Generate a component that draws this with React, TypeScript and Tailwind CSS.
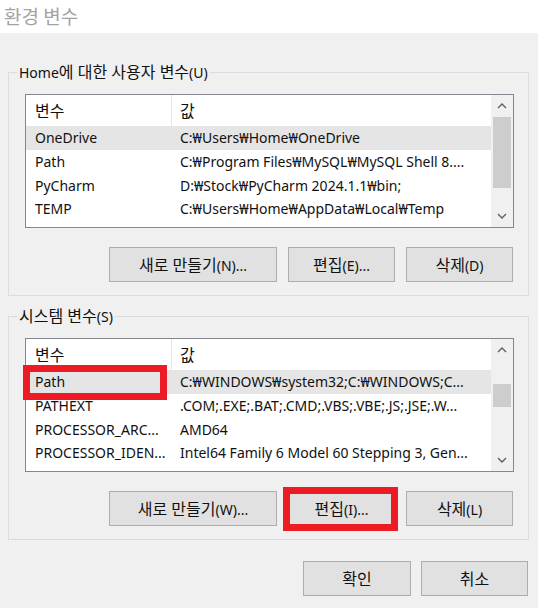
import React from "react";

type Row = { name: string; value: string };

const userRows: Row[] = [
  { name: "OneDrive", value: "C:₩Users₩Home₩OneDrive" },
  { name: "Path", value: "C:₩Program Files₩MySQL₩MySQL Shell 8...." },
  { name: "PyCharm", value: "D:₩Stock₩PyCharm 2024.1.1₩bin;" },
  { name: "TEMP", value: "C:₩Users₩Home₩AppData₩Local₩Temp" },
];

const sysRows: Row[] = [
  { name: "Path", value: "C:₩WINDOWS₩system32;C:₩WINDOWS;C..." },
  { name: "PATHEXT", value: ".COM;.EXE;.BAT;.CMD;.VBS;.VBE;.JS;.JSE;.W..." },
  { name: "PROCESSOR_ARC...", value: "AMD64" },
  { name: "PROCESSOR_IDEN...", value: "Intel64 Family 6 Model 60 Stepping 3, Gen..." },
];

// Renders Hangul runs a little larger, as Malgun Gothic does next to Latin text.
function K({ t }: { t: string }) {
  const parts = t.split(/([\uAC00-\uD7A3]+(?:\s[\uAC00-\uD7A3]+)*)/);
  return (
    <>
      {parts.map((p, i) =>
        /[\uAC00-\uD7A3]/.test(p) ? (
          <span key={i} className="text-[16px]">
            {p}
          </span>
        ) : (
          <span key={i}>{p}</span>
        )
      )}
    </>
  );
}

function Chevron({ up }: { up: boolean }) {
  return (
    <svg width="10" height="6" viewBox="0 0 10 6">
      {up ? (
        <polyline points="1,5 5,1 9,5" fill="none" stroke="#606060" strokeWidth="1.4" />
      ) : (
        <polyline points="1,1 5,5 9,1" fill="none" stroke="#606060" strokeWidth="1.4" />
      )}
    </svg>
  );
}

function Scrollbar({ gap, thumb }: { gap: number; thumb: number }) {
  return (
    <div className="flex w-[22px] shrink-0 flex-col bg-[#f0f0f0]">
      <div className="flex h-[22px] shrink-0 items-center justify-center">
        <Chevron up />
      </div>
      <div className="shrink-0" style={{ height: gap }} />
      <div className="mx-[2px] shrink-0 bg-[#cdcdcd]" style={{ height: thumb }} />
      <div className="flex-1" />
      <div className="flex h-[22px] shrink-0 items-center justify-center">
        <Chevron up={false} />
      </div>
    </div>
  );
}

function VarList({
  rows,
  gap,
  thumb,
  children,
}: {
  rows: Row[];
  gap: number;
  thumb: number;
  children?: React.ReactNode;
}) {
  return (
    <div className="relative ml-[16px] mt-[12px] flex h-[134px] w-[489px] border border-[#828790] bg-white">
      <div className="flex flex-1 flex-col overflow-hidden">
        <div className="flex h-[31px] shrink-0 items-center">
          <div className="flex h-full w-[146px] shrink-0 items-center border-r border-[#e5e5e5] pl-[9px]">
            <K t="변수" />
          </div>
          <div className="pl-[8px]">
            <K t="값" />
          </div>
        </div>
        {rows.map((r, i) => (
          <div
            key={r.name + i}
            className={
              i === 0
                ? "flex h-[23.67px] shrink-0 items-center bg-[#e5e5e5]"
                : "flex h-[23.67px] shrink-0 items-center"
            }
          >
            <div className="w-[146px] shrink-0 overflow-hidden whitespace-nowrap pl-[9px]">{r.name}</div>
            <div className="overflow-hidden whitespace-nowrap pl-[8px]">{r.value}</div>
          </div>
        ))}
      </div>
      <Scrollbar gap={gap} thumb={thumb} />
      {children}
    </div>
  );
}

function Btn({
  w,
  label,
  extra,
}: {
  w: string;
  label: string;
  extra?: React.ReactNode;
}) {
  return (
    <div
      className={`relative flex h-[35px] items-center justify-center whitespace-nowrap border border-[#adadad] bg-[#e1e1e1] ${w}`}
    >
      <span>
        <K t={label} />
      </span>
      {extra}
    </div>
  );
}

function Group({
  legend,
  children,
  className,
}: {
  legend: string;
  children: React.ReactNode;
  className: string;
}) {
  return (
    <div className={`ml-[8px] flex h-[224px] w-[521px] flex-col border border-[#dcdcdc] ${className}`}>
      <div className="-mt-[11px] ml-[8px] h-[20px] self-start whitespace-nowrap bg-[#f0f0f0] px-[2px] leading-[20px]">
        <K t={legend} />
      </div>
      {children}
    </div>
  );
}

export default function App() {
  return (
    <div className="flex h-[608px] w-[538px] flex-col bg-[#f0f0f0] font-['Noto_Sans','Noto_Sans_CJK_KR',sans-serif] text-[14px] text-[#111]">
      <div className="flex h-[33px] shrink-0 items-center bg-white pb-[1px] pl-[4px] font-['Noto_Sans_CJK_KR',sans-serif] text-[19px] text-[#a3a3a3]">
        환경 변수
      </div>

      <Group legend="Home에 대한 사용자 변수(U)" className="mt-[39px]">
        <VarList rows={userRows} gap={0} thumb={71} />
        <div className="mt-[19px] flex justify-end gap-[11px] pr-[15px]">
          <Btn w="w-[168px]" label="새로 만들기(N)..." />
          <Btn w="w-[107px]" label="편집(E)..." />
          <Btn w="w-[107px]" label="삭제(D)" />
        </div>
      </Group>

      <Group legend="시스템 변수(S)" className="mt-[20px]">
        <VarList rows={sysRows} gap={23} thumb={23}>
          <div className="absolute left-[-3px] top-[26px] h-[35px] w-[144px] border-[7px] border-[#ed1c24]" />
        </VarList>
        <div className="mt-[19px] flex justify-end gap-[11px] pr-[15px]">
          <Btn w="w-[168px]" label="새로 만들기(W)..." />
          <Btn
            w="w-[107px]"
            label="편집(I)..."
            extra={
              <div className="absolute left-[-6px] top-[-5px] h-[44px] w-[115px] border-[7px] border-[#ed1c24]" />
            }
          />
          <Btn w="w-[107px]" label="삭제(L)" />
        </div>
      </Group>

      <div className="mt-[21px] flex justify-end gap-[10px] pr-[10px]">
        <Btn w="w-[108px]" label="확인" />
        <Btn w="w-[107px]" label="취소" />
      </div>
    </div>
  );
}
